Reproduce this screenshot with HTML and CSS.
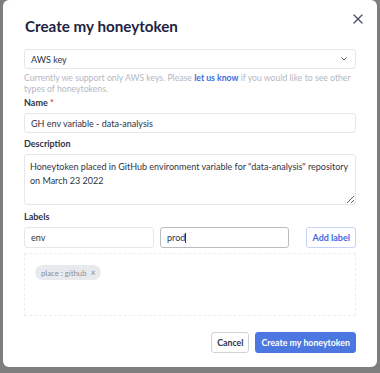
FILE: index.html
```html
<!DOCTYPE html>
<html lang="en">
<head>
    <meta charset="UTF-8">
    <meta name="viewport" content="width=device-width, initial-scale=1.0">
    <title>Create my honeytoken</title>
    <link rel="stylesheet" href="styles.css">
</head>
<body>
    <div class="modal">
        <button class="close-btn" aria-label="Close">
            <svg width="10" height="10" viewBox="0 0 10 10" fill="none" stroke="currentColor" stroke-width="1.3" stroke-linecap="round">
                <line x1="1" y1="1" x2="9" y2="9"></line>
                <line x1="9" y1="1" x2="1" y2="9"></line>
            </svg>
        </button>
        <h1 class="title">Create my honeytoken</h1>

        <div class="select">
            <span>AWS key</span>
            <svg width="6" height="4" viewBox="0 0 6 4" fill="none" stroke="#5a6072" stroke-width="1" stroke-linecap="round">
                <polyline points="0.8,0.8 3,3 5.2,0.8"></polyline>
            </svg>
        </div>
        <p class="help">Currently we support only AWS keys. Please <a href="#">let us know</a> if you would like to see other<br>types of honeytokens.</p>

        <label class="field-label first">Name <span class="required">*</span></label>
        <input class="input" type="text" value="GH env variable - data-analysis">

        <label class="field-label">Description</label>
        <textarea class="input textarea">Honeytoken placed in GitHub environment variable for "data-analysis" repository on March 23 2022</textarea>

        <label class="field-label labels">Labels</label>
        <div class="label-row">
            <input class="input" type="text" value="env">
            <div class="input focused">prod<span class="caret"></span></div>
            <button class="btn-outline">Add label</button>
        </div>
        <div class="tag-box">
            <span class="chip">place : github <span class="chip-x">&times;</span></span>
        </div>

        <div class="actions">
            <button class="btn btn-cancel">Cancel</button>
            <button class="btn btn-primary">Create my honeytoken</button>
        </div>
    </div>
</body>
</html>
```

FILE: styles.css
```css
:root {
    --navy: #1d2340;
    --text: #2e3447;
    --muted: #b4b8c3;
    --border: #e5e7eb;
    --blue: #4d77e0;
    --link: #4568df;
}

* {
    margin: 0;
    padding: 0;
    box-sizing: border-box;
    font-family: 'Lato', 'Open Sans', sans-serif;
}

body {
    background-color: #7e7e7e;
    padding: 0 3px;
    height: 373px;
    overflow: hidden;
}

.modal {
    position: relative;
    background-color: #fff;
    border-radius: 6px;
    height: 367px;
    padding: 15px 21px 0;
    color: var(--text);
}

.close-btn {
    position: absolute;
    top: 13px;
    right: 13px;
    width: 12px;
    height: 12px;
    border: none;
    background: none;
    color: #474d63;
    display: flex;
    align-items: center;
    justify-content: center;
}

.title {
    font-size: 15.2px;
    line-height: 22px;
    font-weight: 700;
    color: var(--navy);
    margin-left: 1px;
}

.select {
    margin-top: 12px;
    height: 20px;
    border: 1px solid var(--border);
    border-radius: 3px;
    display: flex;
    align-items: center;
    justify-content: space-between;
    padding: 0 8px 0 6px;
    font-size: 9px;
    color: var(--text);
}

.help {
    margin-top: 3px;
    font-size: 8.7px;
    line-height: 11px;
    color: var(--muted);
}

.help a {
    color: var(--link);
    text-decoration: none;
    font-weight: 700;
}

.field-label {
    display: block;
    margin-top: 4px;
    font-size: 9px;
    line-height: 13px;
    font-weight: 700;
    color: var(--text);
}

.field-label.first {
    margin-top: 2px;
}

.field-label.labels {
    margin-top: 5px;
}

.required {
    color: #e5484d;
}

.input {
    display: block;
    width: 100%;
    height: 20px;
    margin-top: 4px;
    border: 1px solid var(--border);
    border-radius: 3px;
    padding: 0 6px;
    font-size: 9px;
    color: var(--text);
    background: #fff;
    outline: none;
}

.textarea {
    height: 51px;
    padding: 5px 5px;
    line-height: 14px;
    resize: vertical;
}

.label-row {
    display: flex;
    align-items: center;
    gap: 6px;
    margin-top: 4px;
}

.label-row .input {
    flex: 0 0 130px;
    height: 21px;
    margin-top: 0;
}

.label-row .focused {
    flex: 0 0 129px;
    border-color: #b9bbbf;
    display: flex;
    align-items: center;
}

.caret {
    display: inline-block;
    width: 1px;
    height: 10px;
    background: var(--text);
}

.btn-outline {
    margin-left: auto;
    height: 21px;
    padding: 0 5px;
    border: 1px solid #c8d3f4;
    border-radius: 3px;
    background: #fff;
    color: var(--link);
    font-size: 9px;
    font-weight: 700;
}

.tag-box {
    margin-top: 5px;
    height: 63px;
    border: 1px dashed #eceef1;
    padding: 11px 10px;
    display: flex;
    align-items: flex-start;
}

.chip {
    display: inline-flex;
    align-items: center;
    gap: 4px;
    height: 15px;
    padding: 0 5px 0 6px;
    border-radius: 8px;
    background: #e9eaee;
    color: #8a8f9c;
    font-size: 7.8px;
}

.chip-x {
    font-size: 9px;
    line-height: 1;
}

.actions {
    display: flex;
    justify-content: flex-end;
    gap: 6px;
    margin-top: 16px;
}

.btn {
    height: 21px;
    border-radius: 3px;
    font-size: 8.8px;
    font-weight: 700;
    padding: 0 5px;
}

.btn-cancel {
    background: #fff;
    border: 1px solid #cfd2d8;
    color: var(--text);
}

.btn-primary {
    background: var(--blue);
    border: 1px solid var(--blue);
    color: #fff;
}
```
